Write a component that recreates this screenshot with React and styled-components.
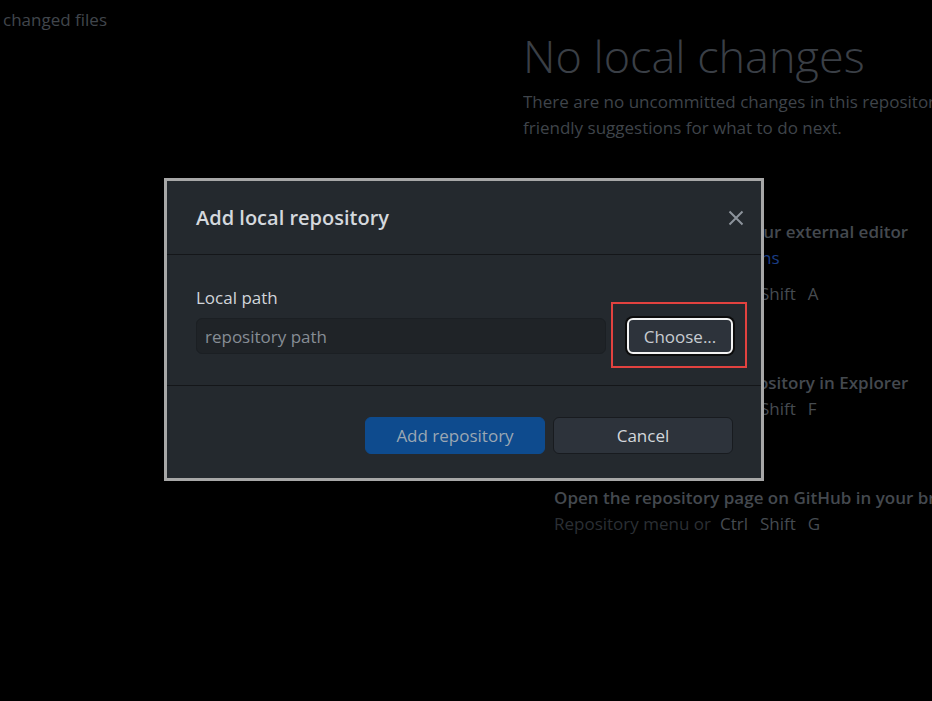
import React from "react";
import styled, { createGlobalStyle } from "styled-components";

const GlobalStyle = createGlobalStyle`
  html, body {
    margin: 0;
    padding: 0;
    background: #000;
  }
  body {
    font-family: "Open Sans", "Noto Sans", sans-serif;
  }
`;

const Page = styled.div`
  position: relative;
  width: 932px;
  height: 701px;
  overflow: hidden;
  display: grid;
  grid-template-columns: 523px 1fr;
  background: #000;
`;

const Sidebar = styled.div`
  padding: 10px 0 0 3px;
  font-size: 17px;
  line-height: 20px;
  color: #41464c;
`;

const Main = styled.div`
  padding-top: 28px;
  white-space: nowrap;
  overflow: hidden;
`;

const BigTitle = styled.h1`
  margin: 0;
  font-size: 45px;
  font-weight: 300;
  line-height: 56px;
  color: #3a3f46;
`;

const Lead = styled.p`
  margin: 5px 0 0;
  font-size: 17px;
  line-height: 26px;
  color: #3f444a;
`;

const Suggestions = styled.div`
  margin-top: 78px;
  padding-left: 31px;
  display: flex;
  flex-direction: column;
  gap: 63px;
`;

const Suggestion = styled.div`
  display: flex;
  flex-direction: column;
`;

const SuggestionTitle = styled.div`
  font-size: 17px;
  font-weight: 600;
  line-height: 26px;
  color: #44494f;
`;

const SuggestionLink = styled.div`
  font-size: 17px;
  line-height: 26px;
  margin-bottom: 10px;
  color: #4a4f55;
  span {
    color: #1b3d86;
  }
`;

const Shortcut = styled.div`
  font-size: 17px;
  line-height: 26px;
  color: #2b2f34;
`;

const Key = styled.kbd`
  font-family: inherit;
  font-size: 17px;
  color: #464b51;
  padding: 0 5px;
  margin-left: ${(p) => (p.first ? "4px" : "2px")};
`;

const Overlay = styled.div`
  position: absolute;
  inset: 0;
  padding: 178px 0 0 164px;
`;

const Dialog = styled.div`
  width: 594px;
  border: 3px solid #a7a7a7;
  background: #24292e;
  color: #d1d5da;
`;

const Header = styled.div`
  height: 73px;
  padding: 0 13px 0 29px;
  display: flex;
  align-items: center;
  justify-content: space-between;
  border-bottom: 1px solid #141619;
`;

const Title = styled.h2`
  margin: 0;
  font-size: 20px;
  font-weight: 600;
  color: #d4d8dd;
`;

const CloseButton = styled.button`
  width: 24px;
  height: 24px;
  padding: 0;
  border: 0;
  background: none;
  color: #8c939b;
  display: flex;
  align-items: center;
  justify-content: center;
`;

const Body = styled.div`
  padding: 31px 28px 31px 29px;
  border-bottom: 1px solid #141619;
`;

const Label = styled.div`
  font-size: 17px;
  line-height: 23px;
  margin-bottom: 9px;
  color: #d1d5da;
`;

const PathRow = styled.div`
  display: flex;
  align-items: center;
`;

const PathInput = styled.input`
  flex: 1;
  height: 36px;
  box-sizing: border-box;
  padding: 0 8px;
  border: 1px solid #1b1f23;
  border-radius: 6px;
  background: #1f2327;
  font-family: inherit;
  font-size: 17px;
  color: #d1d5da;
  outline: none;
  &::placeholder {
    color: #868d95;
  }
`;

const Highlight = styled.div`
  margin: -16px -14px -14px 5px;
  padding: 14px 12px 12px 14px;
  border: 2px solid #e2423f;
`;

const Button = styled.button`
  width: ${(p) => p.width || "180px"};
  height: ${(p) => p.height || "37px"};
  box-sizing: border-box;
  border-radius: 6px;
  font-family: inherit;
  font-size: 17px;
  padding: 0;
  cursor: pointer;
  background: ${(p) => (p.primary ? "#0e4b8e" : "#2d333b")};
  color: ${(p) => (p.primary ? "#9ba7b3" : "#d3d7db")};
  border: ${(p) => (p.primary ? "1px solid #0e4b8e" : "1px solid #181b1f")};
`;

const FocusButton = styled(Button)`
  border: 2px solid #f2f2f2;
  box-shadow: 0 0 0 2px #0c0c0c;
  color: #c7ccd1;
`;

const Footer = styled.div`
  padding: 31px 28px 24px;
  display: flex;
  justify-content: flex-end;
  gap: 8px;
`;

const CloseIcon = () => (
  <svg width="16" height="16" viewBox="0 0 16 16" fill="none">
    <path d="M1.5 1.5L14.5 14.5M14.5 1.5L1.5 14.5" stroke="currentColor" strokeWidth="2" />
  </svg>
);

export default function App() {
  return (
    <>
      <GlobalStyle />
      <Page>
        <Sidebar>changed files</Sidebar>
        <Main>
          <BigTitle>No local changes</BigTitle>
          <Lead>
            There are no uncommitted changes in this repository. Here are some
            <br />
            friendly suggestions for what to do next.
          </Lead>
          <Suggestions>
            <Suggestion>
              <SuggestionTitle>Open the repository in your external editor</SuggestionTitle>
              <SuggestionLink>
                Select your editor in <span>Options</span>
              </SuggestionLink>
              <Shortcut>
                Repository menu or<Key first>Ctrl</Key>
                <Key>Shift</Key>
                <Key>A</Key>
              </Shortcut>
            </Suggestion>
            <Suggestion>
              <SuggestionTitle>View the files of your repository in Explorer</SuggestionTitle>
              <Shortcut>
                Repository menu or<Key first>Ctrl</Key>
                <Key>Shift</Key>
                <Key>F</Key>
              </Shortcut>
            </Suggestion>
            <Suggestion>
              <SuggestionTitle>Open the repository page on GitHub in your browser</SuggestionTitle>
              <Shortcut>
                Repository menu or<Key first>Ctrl</Key>
                <Key>Shift</Key>
                <Key>G</Key>
              </Shortcut>
            </Suggestion>
          </Suggestions>
        </Main>
        <Overlay>
          <Dialog>
            <Header>
              <Title>Add local repository</Title>
              <CloseButton aria-label="Close">
                <CloseIcon />
              </CloseButton>
            </Header>
            <Body>
              <Label>Local path</Label>
              <PathRow>
                <PathInput placeholder="repository path" />
                <Highlight>
                  <FocusButton width="106px" height="36px">
                    Choose...
                  </FocusButton>
                </Highlight>
              </PathRow>
            </Body>
            <Footer>
              <Button primary>Add repository</Button>
              <Button>Cancel</Button>
            </Footer>
          </Dialog>
        </Overlay>
      </Page>
    </>
  );
}
